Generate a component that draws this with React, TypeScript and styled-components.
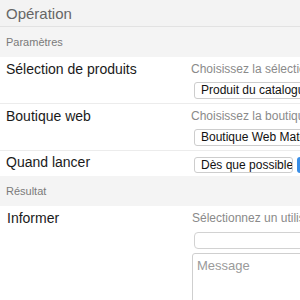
import React from "react";
import styled, { createGlobalStyle } from "styled-components";

const Global = createGlobalStyle`
  html, body { margin: 0; padding: 0; background: #fff; overflow: hidden; }
  body { font-family: "Liberation Sans", Arial, Helvetica, sans-serif; color: #222; }
  #root { width: 300px; height: 300px; overflow: hidden; }
`;

const Panel = styled.div`
  width: 440px;
  display: flex;
  flex-direction: column;
`;

const Header = styled.div`
  height: 26px;
  background: #f3f3f3;
  border-bottom: 1px solid #e2e2e2;
  display: flex;
  align-items: center;
  padding-left: 6px;
  font-size: 15px;
  color: #666;
  box-sizing: content-box;
`;

const Section = styled.div`
  height: 30px;
  background: #f4f4f4;
  display: flex;
  align-items: center;
  padding-left: 6px;
  font-size: 11px;
  color: #7a7a7a;
`;

const Row = styled.div<{ $compact?: boolean; $last?: boolean; $edge?: boolean }>`
  display: grid;
  grid-template-columns: 191px 1fr;
  padding: ${(p) => (p.$compact ? "3px 0 3px 0" : "4px 0 4px 0")};
  border-bottom: ${(p) => (p.$last ? "none" : "1px solid #ececec")};
  border-left: ${(p) => (p.$edge ? "1px solid #e4e4e4" : "none")};
  margin-left: ${(p) => (p.$edge ? "-1px" : "0")};
  padding-left: ${(p) => (p.$edge ? "1px" : "0")};
  align-items: start;
`;

const Label = styled.div`
  padding-left: 6px;
  font-size: 14px;
  line-height: 17px;
  color: #1a1a1a;
`;

const Field = styled.div`
  display: flex;
  flex-direction: column;
  align-items: flex-start;
  gap: 5px;
`;

const Help = styled.div`
  font-size: 12px;
  line-height: 16px;
  color: #8a8a8a;
  white-space: nowrap;
`;

const Select = styled.div<{ $w?: number; $h?: number }>`
  box-sizing: border-box;
  height: ${(p) => (p.$h ? `${p.$h}px` : "17px")};
  width: ${(p) => (p.$w ? `${p.$w}px` : "240px")};
  margin-left: 3px;
  border: 1px solid #cdcdcd;
  border-radius: 3px;
  background: #fff;
  font-size: 12px;
  line-height: ${(p) => (p.$h ? `${p.$h - 2}px` : "15px")};
  padding-left: 6px;
  color: #111;
  white-space: nowrap;
  overflow: hidden;
`;

const Inline = styled.div`
  display: flex;
  align-items: center;
  gap: 4px;
  margin-top: 3px;
`;

const BlueBtn = styled.div`
  width: 40px;
  height: 16px;
  border-radius: 3px;
  background: #3a8ee6;
`;

const Input = styled.div`
  box-sizing: border-box;
  height: 17px;
  width: 240px;
  margin-left: 2px;
  margin-top: 1px;
  border: 1px solid #d2d2d2;
  border-radius: 4px;
  background: #fff;
`;

const TextArea = styled.div`
  box-sizing: border-box;
  width: 240px;
  height: 80px;
  margin-top: -1px;
  border: 1px solid #cfcfcf;
  border-radius: 3px;
  padding: 4px 0 0 4px;
  font-size: 13px;
  color: #9a9a9a;
`;

export default function App() {
  return (
    <>
      <Global />
      <Panel>
        <Header>Opération</Header>
        <Section>Paramètres</Section>
        <Row>
          <Label>Sélection de produits</Label>
          <Field>
            <Help>Choisissez la sélection de produits</Help>
            <Select>Produit du catalogue</Select>
          </Field>
        </Row>
        <Row>
          <Label>Boutique web</Label>
          <Field>
            <Help>Choisissez la boutique web</Help>
            <Select>Boutique Web Materiel</Select>
          </Field>
        </Row>
        <Row $compact $last>
          <Label>Quand lancer</Label>
          <Inline>
            <Select $w={99} $h={16}>Dès que possible</Select>
            <BlueBtn />
          </Inline>
        </Row>
        <Section>Résultat</Section>
        <Row $last $edge>
          <Label>Informer</Label>
          <Field>
            <Help>Sélectionnez un utilisateur</Help>
            <Input />
            <TextArea>Message</TextArea>
          </Field>
        </Row>
      </Panel>
    </>
  );
}
